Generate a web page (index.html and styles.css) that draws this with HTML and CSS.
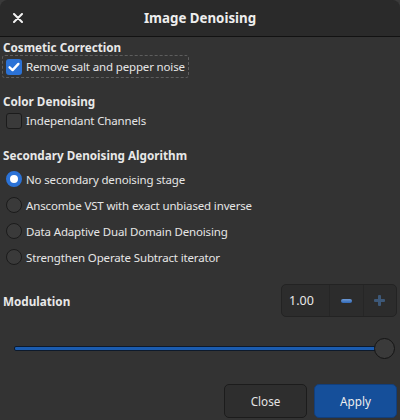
FILE: index.html
```html
<!DOCTYPE html>
<html lang="en">
<head>
  <meta charset="UTF-8" />
  <title>Image Denoising</title>
  <link rel="stylesheet" href="styles.css">
</head>
<body>
  <div class="dialog">
    <header class="titlebar">
      <button class="close-x" title="Close">
        <svg viewBox="0 0 10 10" width="10" height="10"><path d="M1 1 L9 9 M9 1 L1 9" stroke="#f2f2f2" stroke-width="2" stroke-linecap="round"/></svg>
      </button>
      <h1>Image Denoising</h1>
    </header>

    <main class="content">
      <section class="group">
        <h2>Cosmetic Correction</h2>
        <label class="check focused">
          <span class="box checked">
            <svg viewBox="0 0 16 16" width="16" height="16"><path d="M3.6 8.3 L6.6 11.1 L12.4 4.9" fill="none" stroke="#fff" stroke-width="2.4" stroke-linecap="round" stroke-linejoin="round"/></svg>
          </span>
          Remove salt and pepper noise
        </label>
      </section>

      <section class="group">
        <h2>Color Denoising</h2>
        <label class="check">
          <span class="box"></span>
          Independant Channels
        </label>
      </section>

      <section class="group">
        <h2>Secondary Denoising Algorithm</h2>
        <ul class="radios">
          <li><span class="radio on"></span>No secondary denoising stage</li>
          <li><span class="radio"></span>Anscombe VST with exact unbiased inverse</li>
          <li><span class="radio"></span>Data Adaptive Dual Domain Denoising</li>
          <li><span class="radio"></span>Strengthen Operate Subtract iterator</li>
        </ul>
      </section>

      <section class="modulation">
        <div class="mod-row">
          <h2>Modulation</h2>
          <div class="spin">
            <span class="spin-value">1.00</span>
            <span class="spin-btn"><span class="minus"></span></span>
            <span class="spin-btn"><span class="plus"></span></span>
          </div>
        </div>
        <div class="slider">
          <div class="track"></div>
          <div class="handle"></div>
        </div>
      </section>
    </main>

    <footer class="actions">
      <button class="btn">Close</button>
      <button class="btn primary">Apply</button>
    </footer>
  </div>
</body>
</html>
```

FILE: styles.css
```css
body {
  margin: 0;
  background: #3a3a3a;
  font-family: "Noto Sans", sans-serif;
  font-size: 11.5px;
  letter-spacing: -0.15px;
  color: #e6e6e6;
}
.dialog {
  width: 400px;
  height: 420px;
  background: #333333;
  border-radius: 8px 8px 0 0;
  overflow: hidden;
  display: flex;
  flex-direction: column;
}
.titlebar {
  position: relative;
  height: 36px;
  background: #2a2a2a;
  border-bottom: 1px solid #121212;
  display: flex;
  align-items: center;
  justify-content: center;
}
.titlebar h1 {
  margin: 0;
  font-size: 13.3px;
  letter-spacing: 0;
  font-weight: bold;
  color: #eeeeee;
}
.close-x {
  position: absolute;
  left: 13px;
  top: 13px;
  width: 10px;
  height: 10px;
  padding: 0;
  background: none;
  border: none;
  display: flex;
}
.content {
  flex: 1;
  padding: 2px 2px 0;
}
.group h2,
.mod-row h2 {
  margin: 0 0 0 1px;
  font-size: 11.7px;
  letter-spacing: 0;
  font-weight: bold;
  color: #e8e8e8;
  line-height: 16px;
}
.group {
  margin-bottom: 15px;
}
.check {
  box-sizing: border-box;
  display: inline-flex;
  align-items: center;
  gap: 4px;
  height: 23px;
  padding: 0 3px;
  border: 1px solid transparent;
  border-radius: 3px;
}
.check.focused {
  border: 1px dashed #5e5e5e;
}
.box {
  box-sizing: border-box;
  width: 16px;
  height: 16px;
  border: 1px solid #1b1b1b;
  border-radius: 3px;
  background: #3a3a3a;
  display: flex;
  align-items: center;
  justify-content: center;
}
.box.checked {
  border: none;
  background: #2b72d6;
}
.radios {
  list-style: none;
  margin: 3px 0 0;
  padding: 0;
}
.radios li {
  display: flex;
  align-items: center;
  gap: 4px;
  height: 26px;
  padding-left: 4px;
}
.radio {
  box-sizing: border-box;
  width: 16px;
  height: 16px;
  border: 1px solid #1b1b1b;
  border-radius: 50%;
  background: #3a3a3a;
}
.radio.on {
  border: 4.5px solid #2b72d6;
  background: #ffffff;
}
.modulation {
  margin-top: -1px;
}
.mod-row {
  display: flex;
  align-items: center;
  justify-content: space-between;
  padding-right: 1px;
}
.spin {
  box-sizing: border-box;
  display: flex;
  width: 116px;
  height: 33px;
  border: 1px solid #232323;
  border-radius: 5px;
  background: #2c2c2c;
}
.spin-value {
  box-sizing: border-box;
  width: 47px;
  padding-left: 7px;
  line-height: 31px;
  font-size: 12.5px;
  letter-spacing: 0;
  color: #e8e8e8;
}
.spin-btn {
  flex: 1;
  border-left: 1px solid #262626;
  display: flex;
  align-items: center;
  justify-content: center;
}
.minus {
  width: 11px;
  height: 4px;
  border-radius: 2px;
  background: linear-gradient(#6e9ad6, #2f68b8);
}
.plus {
  position: relative;
  width: 11px;
  height: 11px;
}
.plus::before,
.plus::after {
  content: "";
  position: absolute;
  background: #3d5878;
  border-radius: 1px;
}
.plus::before {
  left: 0;
  right: 0;
  top: 4px;
  height: 3px;
}
.plus::after {
  top: 0;
  bottom: 0;
  left: 4px;
  width: 3px;
}
.slider {
  position: relative;
  height: 21px;
  margin: 21px 3px 0 12px;
}
.track {
  position: absolute;
  left: 0;
  right: 10px;
  top: 8px;
  height: 3px;
  background: #1b5cb0;
  border: 1px solid #0d1a2c;
  border-radius: 2px;
}
.handle {
  box-sizing: border-box;
  position: absolute;
  right: 0;
  top: 0;
  width: 21px;
  height: 21px;
  border: 1px solid #151515;
  border-radius: 50%;
  background: #3a3a3a;
}
.actions {
  display: flex;
  justify-content: flex-end;
  gap: 7px;
  padding: 0 3px 2px;
}
.btn {
  width: 83px;
  height: 34px;
  border: 1px solid #1c1c1c;
  border-radius: 5px;
  background: #2e2e2e;
  color: #e4e4e4;
  font-family: "Noto Sans", sans-serif;
  font-size: 11.7px;
}
.btn.primary {
  background: #154f9a;
  border-color: #123f7c;
  color: #eeeeee;
}
```
